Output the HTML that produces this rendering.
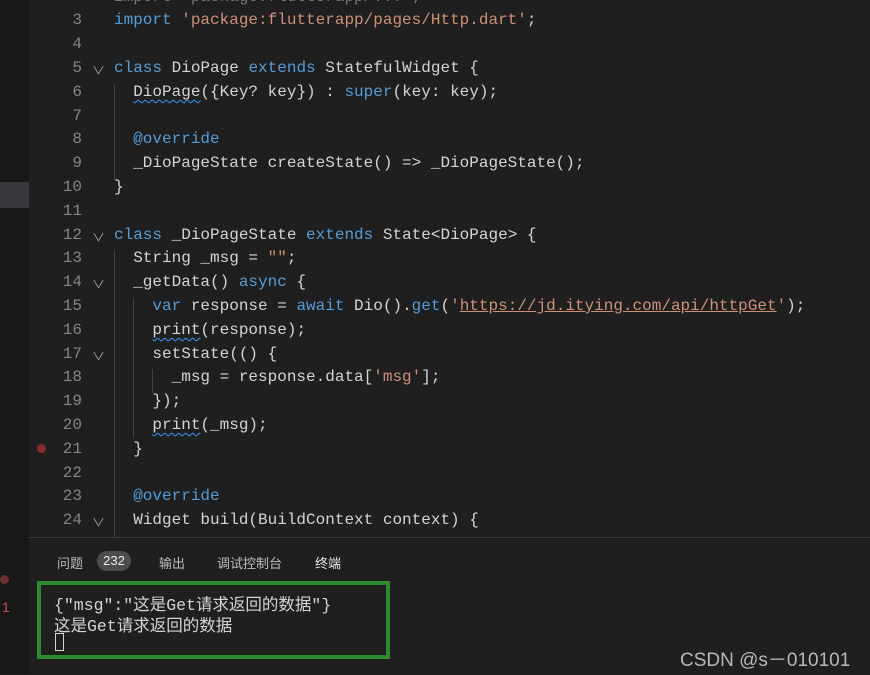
<!DOCTYPE html>
<html><head><meta charset="utf-8"><style>
html,body{margin:0;padding:0;}
body{width:870px;height:674px;background:#1f1f1f;position:relative;overflow:hidden;font-family:"Liberation Mono","Noto Sans CJK SC",monospace;}
#side{position:absolute;left:0;top:0;width:29px;height:674px;background:#181818;}
#sel{position:absolute;left:0;top:182px;width:29px;height:26px;background:#37373d;}
.ln{position:absolute;left:40px;width:42px;text-align:right;color:#858585;font-size:16px;}
.code{position:absolute;left:114px;color:#d4d4d4;font-size:16px;white-space:pre;}
.k{color:#569cd6}.s{color:#ce9178}.f{color:#569cd6}
.sq{text-decoration:underline wavy #3794ff;text-underline-offset:3px;text-decoration-thickness:1px}
.u{text-decoration:underline;text-decoration-color:#ce9178}
.fold{position:absolute;left:93px;color:#a0a0a0;font-size:11px;transform:scaleX(1.2);}
.guide{position:absolute;width:1px;background:#404040;}
#panel{position:absolute;left:29px;top:537px;width:841px;height:137px;background:#1f1f1f;border-top:1px solid #3a3a3a;}
.tab{position:absolute;top:553px;font-family:"Liberation Sans","Noto Sans CJK SC",sans-serif;font-size:13px;color:#bdbdbd;}
#badge{position:absolute;left:97px;top:551px;width:34px;height:20px;border-radius:10px;background:#4d4d4d;color:#eee;font-family:"Liberation Sans",sans-serif;font-size:13px;text-align:center;line-height:20px;}
#box{position:absolute;left:37px;top:581px;width:345px;height:70px;border:4px solid #2e8b30;}
.term{position:absolute;left:54px;color:#d4d4d4;font-size:16.5px;font-family:"Liberation Mono","Noto Sans CJK SC",monospace;white-space:pre;}
#wm{position:absolute;left:680px;top:645px;color:#b8b8b8;font-family:"Liberation Sans",sans-serif;font-size:19px;}
</style></head><body>
<div id="side"></div><div id="sel"></div>
<div class="guide" style="left:114px;top:84px;height:96px"></div>
<div class="guide" style="left:114px;top:250px;height:290px"></div>
<div class="guide" style="left:133px;top:298px;height:140px"></div>
<div class="guide" style="left:152px;top:369px;height:24px"></div>

<div class="code" style="top:-12px;color:#777">import 'package:flutterapp/...';</div>
<div class="ln" style="top:11px">3</div><div class="code" style="top:11px"><span class="k">import</span> <span class="s">'package:flutterapp/pages/Http.dart'</span>;</div>
<div class="ln" style="top:35px">4</div>
<div class="ln" style="top:59px">5</div><div class="fold" style="top:62px">∨</div><div class="code" style="top:59px"><span class="k">class</span> DioPage <span class="k">extends</span> StatefulWidget {</div>
<div class="ln" style="top:83px">6</div><div class="code" style="top:83px">  <span class="sq">DioPage</span>({Key? key}) : <span class="k">super</span>(key: key);</div>
<div class="ln" style="top:107px">7</div>
<div class="ln" style="top:130px">8</div><div class="code" style="top:130px">  <span class="k">@override</span></div>
<div class="ln" style="top:154px">9</div><div class="code" style="top:154px">  _DioPageState createState() =&gt; _DioPageState();</div>
<div class="ln" style="top:178px">10</div><div class="code" style="top:178px">}</div>
<div class="ln" style="top:202px">11</div>
<div class="ln" style="top:226px">12</div><div class="fold" style="top:229px">∨</div><div class="code" style="top:226px"><span class="k">class</span> _DioPageState <span class="k">extends</span> State&lt;DioPage&gt; {</div>
<div class="ln" style="top:249px">13</div><div class="code" style="top:249px">  String _msg = <span class="s">""</span>;</div>
<div class="ln" style="top:273px">14</div><div class="fold" style="top:276px">∨</div><div class="code" style="top:273px">  _getData() <span class="k">async</span> {</div>
<div class="ln" style="top:297px">15</div><div class="code" style="top:297px">    <span class="k">var</span> response = <span class="k">await</span> Dio().<span class="f">get</span>(<span class="s">'<span class="u">https://jd.itying.com/api/httpGet</span>'</span>);</div>
<div class="ln" style="top:321px">16</div><div class="code" style="top:321px">    <span class="sq">print</span>(response);</div>
<div class="ln" style="top:345px">17</div><div class="fold" style="top:348px">∨</div><div class="code" style="top:345px">    setState(() {</div>
<div class="ln" style="top:368px">18</div><div class="code" style="top:368px">      _msg = response.data[<span class="s">'msg'</span>];</div>
<div class="ln" style="top:392px">19</div><div class="code" style="top:392px">    });</div>
<div class="ln" style="top:416px">20</div><div class="code" style="top:416px">    <span class="sq">print</span>(_msg);</div>
<div style="position:absolute;left:37px;top:444px;width:9px;height:9px;border-radius:50%;background:#8b2b2b"></div>
<div class="ln" style="top:440px">21</div><div class="code" style="top:440px">  }</div>
<div class="ln" style="top:464px">22</div>
<div class="ln" style="top:487px">23</div><div class="code" style="top:487px">  <span class="k">@override</span></div>
<div class="ln" style="top:511px">24</div><div class="fold" style="top:514px">∨</div><div class="code" style="top:511px">  Widget build(BuildContext context) {</div>

<div id="panel"></div>
<div class="tab" style="left:57px">问题</div><div id="badge">232</div>
<div class="tab" style="left:159px">输出</div>
<div class="tab" style="left:217px">调试控制台</div>
<div class="tab" style="left:315px;color:#e8e8e8">终端</div>
<div style="position:absolute;left:0;top:575px;width:9px;height:9px;border-radius:50%;background:#6b3030"></div>
<div style="position:absolute;left:2px;top:599px;color:#c75050;font-family:'Liberation Sans';font-size:14px">1</div>
<div id="box"></div>
<div class="term" style="top:591px">{"msg":"这是Get请求返回的数据"}</div>
<div class="term" style="top:612px">这是Get请求返回的数据</div>
<div style="position:absolute;left:55px;top:633px;width:7px;height:16px;border:1px solid #d4d4d4"></div>
<div id="wm">CSDN @s－010101</div>
</body></html>
